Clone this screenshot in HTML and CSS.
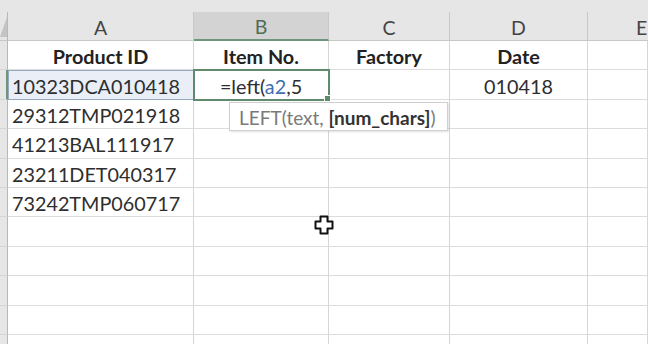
FILE: index.html
```html
<!DOCTYPE html>
<html>
<head>
<meta charset="utf-8">
<link rel="stylesheet" href="styles.css">
</head>
<body>
<div class="sheet">
  <div class="topband"></div>
  <div class="grid">
    <div class="corner"><span class="tri"></span></div>
    <div class="colhead">A</div>
    <div class="colhead sel">B</div>
    <div class="colhead">C</div>
    <div class="colhead">D</div>
    <div class="colhead last">E</div>

    <div class="rowhead"></div>
    <div class="cell bold center">Product ID</div>
    <div class="cell bold center">Item No.</div>
    <div class="cell bold center">Factory</div>
    <div class="cell bold center">Date</div>
    <div class="cell"></div>

    <div class="rowhead selrow"></div>
    <div class="cell asel">10323DCA010418</div>
    <div class="cell active center"><span>=left(<span class="ref">a2</span>,5</span><span class="handle"></span></div>
    <div class="cell"></div>
    <div class="cell center">010418</div>
    <div class="cell"></div>

    <div class="rowhead"></div>
    <div class="cell">29312TMP021918</div>
    <div class="cell"></div><div class="cell"></div><div class="cell"></div><div class="cell"></div>

    <div class="rowhead"></div>
    <div class="cell">41213BAL111917</div>
    <div class="cell"></div><div class="cell"></div><div class="cell"></div><div class="cell"></div>

    <div class="rowhead"></div>
    <div class="cell">23211DET040317</div>
    <div class="cell"></div><div class="cell"></div><div class="cell"></div><div class="cell"></div>

    <div class="rowhead"></div>
    <div class="cell">73242TMP060717</div>
    <div class="cell"></div><div class="cell"></div><div class="cell"></div><div class="cell"></div>

    <div class="rowhead"></div>
    <div class="cell"></div><div class="cell"></div><div class="cell"></div><div class="cell"></div><div class="cell"></div>
    <div class="rowhead"></div>
    <div class="cell"></div><div class="cell"></div><div class="cell"></div><div class="cell"></div><div class="cell"></div>
    <div class="rowhead"></div>
    <div class="cell"></div><div class="cell"></div><div class="cell"></div><div class="cell"></div><div class="cell"></div>
    <div class="rowhead"></div>
    <div class="cell"></div><div class="cell"></div><div class="cell"></div><div class="cell"></div><div class="cell"></div>
    <div class="rowhead"></div>
    <div class="cell"></div><div class="cell"></div><div class="cell"></div><div class="cell"></div><div class="cell"></div>
  </div>

  <div class="tooltip"><span>LEFT(text, <b>[num_chars]</b>)</span></div>

  <svg class="cursor" width="22" height="22" viewBox="0 0 22 22">
    <path d="M7.5 2.5 H14.5 V7.5 H19.5 V14.5 H14.5 V19.5 H7.5 V14.5 H2.5 V7.5 H7.5 Z" fill="#fff" stroke="#111" stroke-width="2" stroke-linejoin="round"/>
  </svg>
</div>
</body>
</html>
```

FILE: styles.css
```css
html, body {
  margin: 0;
  padding: 0;
  background: #fff;
}
body {
  width: 648px;
  height: 344px;
  overflow: hidden;
  font-family: "Lato", "Open Sans", sans-serif;
}
.sheet {
  position: relative;
  width: 648px;
  height: 344px;
  overflow: hidden;
}
.topband {
  height: 12px;
  background: #e6e6e6;
}
.grid {
  display: grid;
  grid-template-columns: 8px 186px 135px 121px 138px 60px;
  grid-template-rows: 29px;
  grid-auto-rows: 29.4px;
}
.corner {
  background: #e6e6e6;
  border-right: 1px solid #b8b8b8;
  border-bottom: 1px solid #c8c8c8;
  position: relative;
}
.tri {
  position: absolute;
  left: 0;
  bottom: 3px;
  width: 0;
  height: 0;
  border-left: 7px solid transparent;
  border-bottom: 20px solid #c4c4c4;
}
.colhead {
  background: #e6e6e6;
  border-right: 1px solid #c9c9c9;
  border-bottom: 1px solid #c8c8c8;
  color: #444;
  font-size: 19.5px;
  display: flex;
  align-items: center;
  justify-content: center;
  padding-top: 2px;
  box-sizing: border-box;
}
.colhead.sel {
  background: #d3d3d3;
  border-bottom: 2px solid #6f967c;
  color: #4d6e57;
}
.colhead.last {
  justify-content: flex-start;
  padding-left: 48px;
  border-right: none;
}
.rowhead {
  background: #e6e6e6;
  border-right: 1px solid #b8b8b8;
  border-bottom: 1px solid #d6d6d6;
}
.rowhead.selrow {
  border-right: 2px solid #6f967c;
}
.cell {
  border-right: 1px solid #d6d6d6;
  border-bottom: 1px solid #dcdcdc;
  color: #2e2e2e;
  font-size: 19.8px;
  display: flex;
  align-items: center;
  padding: 2px 0 0 4px;
  box-sizing: border-box;
  white-space: nowrap;
  position: relative;
}
.center {
  justify-content: center;
  padding-left: 0;
}
.bold {
  font-weight: 700;
  color: #222;
}
.asel {
  background: #e9eef7;
  outline: 1.5px solid #9aa8bf;
  outline-offset: -1px;
}
.active {
  outline: 2px solid #5f8a6c;
  outline-offset: -1px;
  z-index: 2;
}
.ref {
  color: #3f6fb0;
}
.handle {
  position: absolute;
  right: -3px;
  bottom: -3px;
  width: 5px;
  height: 5px;
  background: #5f8a6c;
  border: 1px solid #fff;
}
.tooltip {
  position: absolute;
  left: 229px;
  top: 102px;
  width: 219px;
  height: 29px;
  box-sizing: border-box;
  background: #fff;
  border: 1px solid #cfcfcf;
  box-shadow: 1px 1px 2px rgba(0,0,0,0.12);
  color: #7a7a7a;
  font-size: 19px;
  display: flex;
  align-items: center;
  padding: 1px 0 0 9px;
  white-space: nowrap;
  z-index: 3;
}
.tooltip b {
  color: #333;
  font-weight: 700;
}
.cursor {
  position: absolute;
  left: 313px;
  top: 214px;
  z-index: 4;
}
```
